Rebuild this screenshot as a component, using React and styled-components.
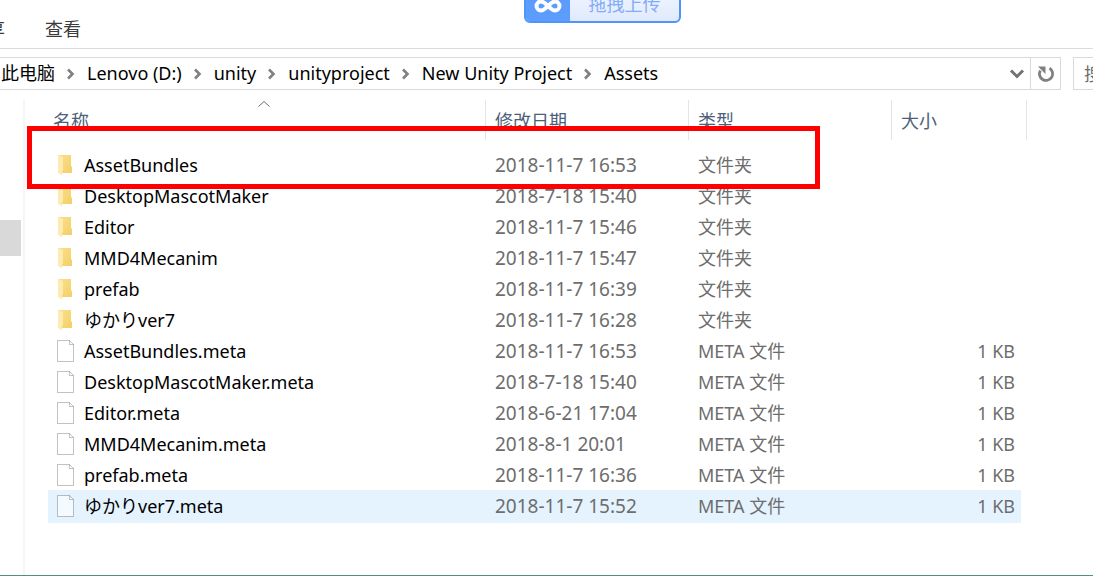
import React, { useState } from 'react';
import styled, { createGlobalStyle } from 'styled-components';

const crumbs = ['此电脑', 'Lenovo (D:)', 'unity', 'unityproject', 'New Unity Project', 'Assets'];

const files = [
  { name: 'AssetBundles', date: '2018-11-7 16:53', folder: true },
  { name: 'DesktopMascotMaker', date: '2018-7-18 15:40', folder: true },
  { name: 'Editor', date: '2018-11-7 15:46', folder: true },
  { name: 'MMD4Mecanim', date: '2018-11-7 15:47', folder: true },
  { name: 'prefab', date: '2018-11-7 16:39', folder: true },
  { name: 'ゆかりver7', date: '2018-11-7 16:28', folder: true },
  { name: 'AssetBundles.meta', date: '2018-11-7 16:53' },
  { name: 'DesktopMascotMaker.meta', date: '2018-7-18 15:40' },
  { name: 'Editor.meta', date: '2018-6-21 17:04' },
  { name: 'MMD4Mecanim.meta', date: '2018-8-1 20:01' },
  { name: 'prefab.meta', date: '2018-11-7 16:36' },
  { name: 'ゆかりver7.meta', date: '2018-11-7 15:52' },
];

const FolderIcon = () => (
  <svg width="18" height="22" viewBox="0 0 18 22" aria-hidden="true">
    <defs>
      <linearGradient id="folderBack" x1="0" y1="0" x2="1" y2="1">
        <stop offset="0" stopColor="#fbe08c" />
        <stop offset="1" stopColor="#f3cf68" />
      </linearGradient>
    </defs>
    <path d="M1 1h13v11l1 1v6H4z" fill="url(#folderBack)" />
    <path d="M1 1l5 2v13l-1 1v4.500L1 19z" fill="#fdebb1" />
  </svg>
);

const FileIcon = () => (
  <svg width="18" height="22" viewBox="0 0 18 22" aria-hidden="true">
    <path d="M.5.500h12l4 4v17H.5z" fill="#fff" fillOpacity=".6" stroke="#000" strokeOpacity=".24" />
    <path d="M12.500.500v4h4" fill="none" stroke="#000" strokeOpacity=".24" />
  </svg>
);

const Chevron = () => (
  <svg width="10" height="12" viewBox="0 0 10 12" aria-hidden="true">
    <path d="M2 1.500L6.500 6 2 10.500" fill="none" stroke="#808080" strokeWidth="2.600" />
  </svg>
);

const App = () => {
  const [selected, setSelected] = useState('ゆかりver7.meta');

  return (
    <Window>
      <GlobalStyle />
      <Ribbon>
        <Tab>共享</Tab>
        <Tab>查看</Tab>
      </Ribbon>

      <Upload type="button">
        <UploadLogo>
          <svg width="30" height="18" viewBox="0 0 30 18" aria-hidden="true">
            <path
              d="M22 4.500c-3 0-4.500 2-7 4.500s-4 4.500-7 4.500a4.500 4.500 0 0 1 0-9c3 0 4.500 2 7 4.500s4 4.500 7 4.500a4.500 4.500 0 0 0 0-9z"
              fill="none"
              stroke="#fff"
              strokeWidth="4"
            />
          </svg>
        </UploadLogo>
        <UploadText>拖拽上传</UploadText>
      </Upload>

      <AddressRow>
        <AddressBar aria-label="Path">
          {crumbs.map((crumb, i) => (
            <React.Fragment key={crumb}>
              {i > 0 && <Chevron />}
              <Crumb href="#">{crumb}</Crumb>
            </React.Fragment>
          ))}
          <HistoryButton type="button" aria-label="History">
            <svg width="16" height="12" viewBox="0 0 16 12" aria-hidden="true">
              <path d="M2 2.500L8 8.500l6-6" fill="none" stroke="#737373" strokeWidth="3" />
            </svg>
          </HistoryButton>
          <RefreshButton type="button" aria-label="Refresh">
            <svg width="18" height="18" viewBox="0 0 18 18" aria-hidden="true">
              <path d="M12.500 3.200A6.600 6.600 0 1 1 3.400 5.400" fill="none" stroke="#808080" strokeWidth="2.800" />
              <path d="M1 1.500h7.500V9L6.500 7 4.500 5z" fill="#808080" />
            </svg>
          </RefreshButton>
        </AddressBar>
        <Search type="text" placeholder="搜索" aria-label="Search" />
      </AddressRow>

      <Main>
        <NavPane>
          <NavItem />
        </NavPane>
        <ListPane>
          <Table>
            <colgroup>
              <col />
              <col width="203" />
              <col width="203" />
              <col width="129" />
              <col width="6" />
            </colgroup>
            <thead>
              <tr>
                <Th $first>
                  名称
                  <SortMark>
                    <svg width="12" height="7" viewBox="0 0 12 7" aria-hidden="true">
                      <path d="M.5 6.500l5.500-5 5.500 5" fill="none" stroke="#6d6d6d" />
                    </svg>
                  </SortMark>
                </Th>
                <Th>修改日期</Th>
                <Th>类型</Th>
                <Th $open>大小</Th>
                <Th as="td" />
              </tr>
            </thead>
            <tbody>
              {files.map((file) => (
                <Row
                  key={file.name}
                  $selected={file.name === selected}
                  onClick={() => setSelected(file.name)}
                >
                  <Td>
                    <Name>
                      {file.folder ? <FolderIcon /> : <FileIcon />}
                      {file.name}
                    </Name>
                  </Td>
                  <DateTd $muted>{file.date}</DateTd>
                  <Td $muted>{file.folder ? '文件夹' : 'META 文件'}</Td>
                  <Td $muted $right>{file.folder ? '' : '1 KB'}</Td>
                </Row>
              ))}
            </tbody>
          </Table>
          <Marker />
        </ListPane>
      </Main>
    </Window>
  );
};

const GlobalStyle = createGlobalStyle`
  * {
    box-sizing: border-box;
  }

  body {
    margin: 0;
    background: #fff;
  }

  body, button, input {
    font-family: "Noto Sans", "Noto Sans CJK SC", "Noto Sans CJK JP", sans-serif;
    font-size: 18px;
  }
`;

const Window = styled.div`
  position: relative;
  overflow: hidden;
  color: #000;
`;

const Ribbon = styled.div`
  display: flex;
  align-items: center;
  gap: 40px;
  height: 49px;
  padding-top: 10px;
  border-bottom: 1px solid #dadbdc;
`;

const Tab = styled.button`
  padding: 0;
  border: 0;
  background: none;
  color: #3b3b3b;
  line-height: 24px;

  &:first-child {
    margin-left: -31px;
  }
`;

/* floating upload widget, hangs over the top edge */
const Upload = styled.button`
  position: absolute;
  top: -11px;
  left: 524px;
  display: flex;
  width: 157px;
  height: 34px;
  padding: 0;
  overflow: hidden;
  border: 2px solid #4e95fa;
  border-radius: 6px;
  background: linear-gradient(#f0f5ff, #e0eafd);
`;

const UploadLogo = styled.span`
  display: flex;
  align-items: center;
  justify-content: center;
  width: 44px;
  height: 100%;
  background: #5c9cfd;
`;

const UploadText = styled.span`
  flex: 1;
  color: #84abf8;
  line-height: 26px;
`;

const AddressRow = styled.div`
  display: flex;
  gap: 12px;
  margin: 8px -20px 0 0;
`;

const AddressBar = styled.nav`
  display: flex;
  flex: 1;
  align-items: center;
  gap: 11px;
  height: 33px;
  padding-left: 1px;
  border: 1px solid #d9d9d9;
  border-width: 1px 1px 1px 0;
`;

const Crumb = styled.a`
  padding-bottom: 2px;
  color: #000;
  line-height: 28px;
  text-decoration: none;
  white-space: nowrap;
`;

const IconButton = styled.button`
  display: flex;
  align-items: center;
  justify-content: center;
  height: 100%;
  padding: 0;
  border: 0;
  background: none;
`;

const HistoryButton = styled(IconButton)`
  width: 26px;
  margin-left: auto;
  margin-right: -11px;
`;

const RefreshButton = styled(IconButton)`
  width: 30px;
  border-left: 1px solid #d9d9d9;
`;

const Search = styled.input`
  width: 40px;
  height: 33px;
  padding: 0 0 0 10px;
  border: 1px solid #d9d9d9;

  &::placeholder {
    color: #6d6d6d;
    opacity: 1;
  }
`;

const Main = styled.div`
  display: flex;
  margin-top: 10px;
  border-bottom: 1px solid #4f917c;
`;

const NavPane = styled.aside`
  width: 25px;
  padding-top: 120px;
  border-right: 2px solid #f5f5f5;
`;

const NavItem = styled.div`
  width: 21px;
  height: 36px;
  background: #d9d9d9;
`;

const ListPane = styled.main`
  position: relative;
  flex: 1;
  padding: 0 66px 53px 23px;
`;

const Table = styled.table`
  width: 100%;
  table-layout: fixed;
  border-spacing: 0;

  tbody::before {
    content: "";
    display: block;
    height: 10px;
  }
`;

const Th = styled.th`
  position: relative;
  height: 40px;
  padding: 2px 0 0 ${({ $first }) => ($first ? '5px' : '9px')};
  border-right: ${({ $open }) => ($open ? '0' : '1px solid #e5e5e5')};
  color: #4c607a;
  font-weight: normal;
  line-height: 38px;
  text-align: left;
`;

const SortMark = styled.span`
  position: absolute;
  top: 0;
  left: 210px;
  display: flex;
`;

const Td = styled.td`
  height: 31px;
  padding: ${({ $right }) => ($right ? '0 6px 2px 0' : '0 0 2px 9px')};
  color: ${({ $muted }) => ($muted ? '#6d6d6d' : '#000')};
  line-height: 28px;
  text-align: ${({ $right }) => ($right ? 'right' : 'left')};
  white-space: nowrap;
`;

const DateTd = styled(Td)`
  font-size: 19px;
`;

const Row = styled.tr`
  td {
    background: ${({ $selected }) => ($selected ? '#e5f3ff' : 'none')};
    box-shadow: ${({ $selected }) => ($selected ? '0 1px 0 #e5f3ff, 0 -1px 0 #e5f3ff' : 'none')};
  }
`;

const Name = styled.div`
  display: flex;
  align-items: center;
  gap: 9px;
  height: 28px;
`;

/* red frame drawn over the first row */
const Marker = styled.div`
  position: absolute;
  top: 26px;
  left: 2px;
  width: 793px;
  height: 63px;
  border: 5px solid #fe0000;
  pointer-events: none;
`;

export default App;
